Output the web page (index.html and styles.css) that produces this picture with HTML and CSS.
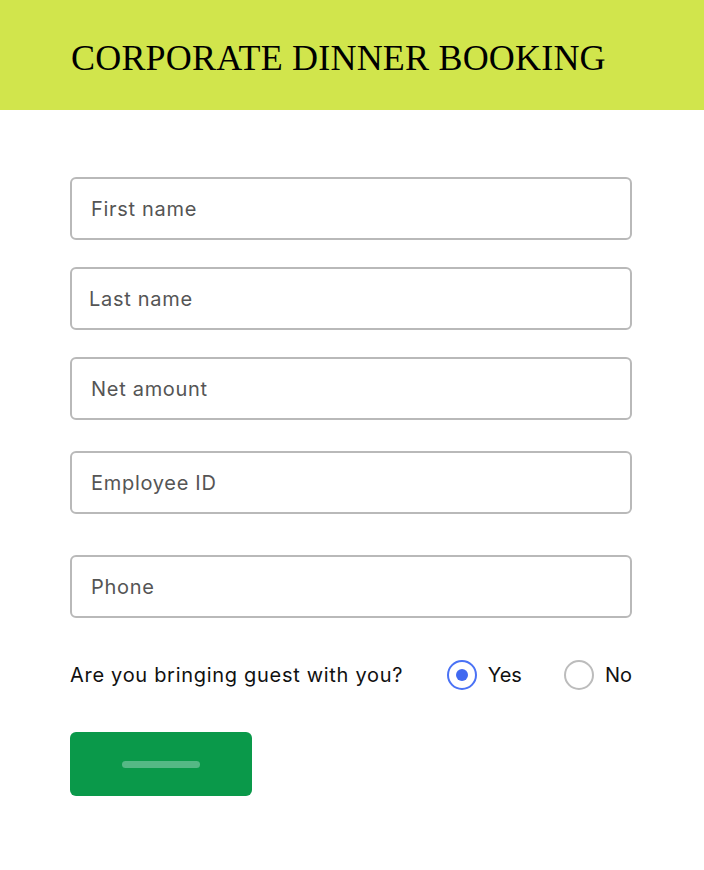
FILE: index.html
```html
<!DOCTYPE html>
<html>
  <head>
    <title>Corporate Dinner Booking</title>
    <meta charset="UTF-8">
    <meta name="viewport" content="width=device-width,initial-scale=1">
    <link rel="stylesheet" href="styles.css">
  </head>
  <body>
    <header class="banner">
      <h1 class="banner_title">CORPORATE DINNER BOOKING</h1>
    </header>
    <form class="booking">
      <div class="fields">
        <input class="field" type="text" placeholder="First name">
        <input class="field field_tight" type="text" placeholder="Last name">
        <input class="field" type="text" placeholder="Net amount">
        <input class="field field_gap" type="text" placeholder="Employee ID">
        <input class="field field_wide" type="tel" placeholder="Phone">
      </div>
      <div class="guest">
        <span class="guest_question">Are you bringing guest with you?</span>
        <div class="guest_options">
          <label class="option">
            <input class="radio" type="radio" name="guest" value="yes" checked>
            <span>Yes</span>
          </label>
          <label class="option">
            <input class="radio" type="radio" name="guest" value="no">
            <span>No</span>
          </label>
        </div>
      </div>
      <button class="submit" type="button"><span class="submit_bar"></span></button>
    </form>
  </body>
</html>
```

FILE: styles.css
```css
body
{
  margin: 0;
  padding: 0;
  background: #ffffff;
  font-family: Inter, "Noto Sans", sans-serif;
  color: #111111;
}

/* 上のタイトル帯 */
.banner
{
  box-sizing: border-box;
  height: 110px;
  padding: 40px 0 0 71px;
  background-color: #d1e54c;
}
.banner_title
{
  margin: 0;
  font-family: "Liberation Serif", "Times New Roman", serif;
  font-size: 36px;
  font-weight: normal;
  line-height: 36px;
  letter-spacing: 0.2px;
  color: #000000;
}

.booking
{
  width: 562px;
  margin-left: 70px;
  padding-top: 67px;
}

.fields
{
  display: flex;
  flex-direction: column;
  gap: 27px;
}
.field
{
  box-sizing: border-box;
  width: 100%;
  height: 63px;
  padding: 0 18px 0 19px;
  border: 2px solid #b9b9b9;
  border-radius: 6px;
  font-family: inherit;
  font-size: 20px;
  letter-spacing: 0.7px;
  color: #333333;
  outline: none;
}
.field::placeholder
{
  color: #555555;
}
.field_tight
{
  padding-left: 17px;
}
.field_gap
{
  margin-top: 4px;
}
.field_wide
{
  margin-top: 14px;
}

/* ゲストの質問 */
.guest
{
  display: flex;
  align-items: center;
  margin-top: 42px;
  height: 30px;
  font-size: 20px;
}
.guest_question
{
  flex: 1;
  letter-spacing: 0.7px;
}
.guest_options
{
  display: flex;
  align-items: center;
  gap: 42px;
}
.option
{
  display: flex;
  align-items: center;
  gap: 11px;
}
.radio
{
  appearance: none;
  box-sizing: border-box;
  width: 30px;
  height: 30px;
  margin: 0;
  border: 2px solid #bcbcbc;
  border-radius: 50%;
  display: flex;
  align-items: center;
  justify-content: center;
}
.radio:checked
{
  border-color: #4a72f5;
}
.radio:checked::after
{
  content: "";
  width: 12px;
  height: 12px;
  border-radius: 50%;
  background-color: #4169f0;
}

.submit
{
  display: flex;
  align-items: center;
  justify-content: center;
  width: 182px;
  height: 64px;
  margin-top: 42px;
  padding: 0;
  border: none;
  border-radius: 6px;
  background-color: #0a994a;
}
.submit_bar
{
  width: 78px;
  height: 7px;
  border-radius: 4px;
  background-color: #55b885;
}
```
